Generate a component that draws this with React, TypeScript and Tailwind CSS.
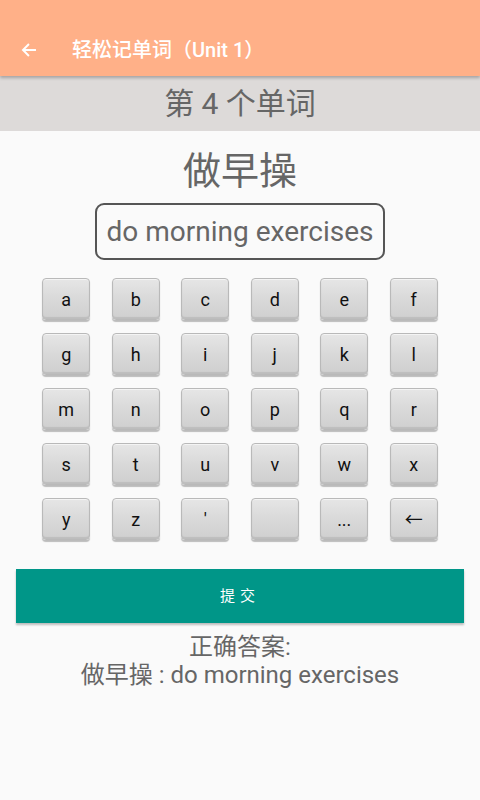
import React from "react";

const rows = [
  ["a", "b", "c", "d", "e", "f"],
  ["g", "h", "i", "j", "k", "l"],
  ["m", "n", "o", "p", "q", "r"],
  ["s", "t", "u", "v", "w", "x"],
  ["y", "z", "'", "", "...", "←"],
];

const Key = ({ label }: { label: string }) => (
  <div className="relative h-[42px] w-[48px] rounded-[4px] border border-[#b9b9b9] bg-gradient-to-b from-[#e6e6e6] via-[#d9d9d9] to-[#cfcfcf] shadow-[0_2px_1px_rgba(0,0,0,0.25),inset_0_1px_0_#f4f4f4,inset_0_-2px_1px_#bdbdbd] flex items-center justify-center text-[18px] text-[#111]">
    {label}
  </div>
);

const App = () => {
  return (
    <div
      className="min-h-[800px] w-[480px] bg-[#fafafa]"
      style={{ fontFamily: "Roboto, 'Noto Sans CJK SC', sans-serif" }}
    >
      {/* Toolbar */}
      <header className="relative z-10 h-[76px] bg-[#ffb088] shadow-[0_2px_3px_rgba(0,0,0,0.25)] flex items-end">
        <div className="h-[52px] w-full flex items-center">
          <svg
            className="ml-[20px] h-[18px] w-[18px]"
            viewBox="0 0 24 24"
            fill="none"
            stroke="white"
            strokeWidth="2.6"
            strokeLinecap="square"
          >
            <path d="M20 12H5M11 5l-7 7 7 7" />
          </svg>
          <span className="ml-[34px] text-[20px] font-medium text-white">
            轻松记单词（Unit 1）
          </span>
        </div>
      </header>

      {/* Progress bar */}
      <div className="h-[55px] bg-[#dddad9] flex items-center justify-center text-[30px] text-[#666]">
        第 4 个单词
      </div>

      <main className="flex flex-col items-center">
        <h1 className="mt-[15px] text-[38px] leading-[50px] text-[#666]">做早操</h1>
        <div className="mt-[7px] h-[57px] w-[290px] rounded-[9px] border-2 border-[#555] flex items-center justify-center text-[28px] text-[#666]">
          do morning exercises
        </div>

        <div className="mt-[18px] flex flex-col gap-[13px]">
          {rows.map((row, i) => (
            <div key={i} className="flex gap-[21.5px]">
              {row.map((k, j) => (
                <Key key={j} label={k} />
              ))}
            </div>
          ))}
        </div>

        <button className="mt-[29px] h-[54px] w-[448px] bg-[#009688] text-[15px] tracking-[5px] text-white shadow-[0_2px_2px_rgba(0,0,0,0.25)]">
          提交
        </button>

        <p className="mt-[10px] text-[24px] leading-[28px] text-[#666]">正确答案:</p>
        <p className="text-[24px] leading-[28px] text-[#666]">做早操 : do morning exercises</p>
      </main>
    </div>
  );
};

export default App;
